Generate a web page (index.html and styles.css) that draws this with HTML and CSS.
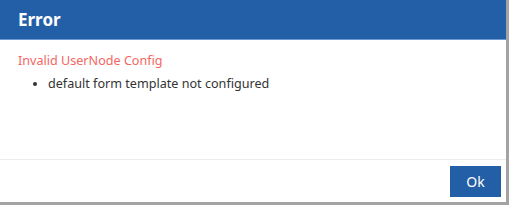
FILE: index.html
```html
<!DOCTYPE html>
<html>
<title>Error</title>

<head>
    <meta charset="utf-8">
    <link rel="stylesheet" href="styles.css">
</head>

<body>
    <div class="dialog">
        <div class="header">
            <h1>Error</h1>
        </div>
        <div class="content">
            <p class="error-title">Invalid UserNode Config</p>
            <ul class="error-list">
                <li>default form template not configured</li>
            </ul>
        </div>
        <div class="footer">
            <button class="ok">Ok</button>
        </div>
    </div>
</body>

</html>
```

FILE: styles.css
```css
body {
    font-family: "Noto Sans", "Open Sans", sans-serif;
    background-color: #a3a3a3;
    margin: 0;
    padding: 0;
    width: 509px;
    height: 205px;
    overflow: hidden;
}

.dialog {
    background-color: #fff;
    width: 506px;
    height: 202px;
    display: flex;
    flex-direction: column;
}

.header {
    background-color: #235fa6;
    border-bottom: 1px solid #6b98d2;
    height: 39px;
    padding: 0 18px;
    display: flex;
    align-items: center;
}

.header h1 {
    margin: 0;
    color: #fff;
    font-size: 17px;
    font-weight: bold;
}

.content {
    flex: 1;
    padding: 12px 18px 0;
}

.error-title {
    margin: 0;
    color: #f4665f;
    font-size: 12.6px;
}

.error-list {
    margin: 6px 0 0;
    padding-left: 30px;
    font-size: 12.6px;
    color: #333;
}

.footer {
    border-top: 1px solid #ececec;
    padding: 6px 5px 5px;
    display: flex;
    justify-content: flex-end;
}

.ok {
    width: 51px;
    height: 31px;
    background-color: #235fa6;
    color: #fff;
    border: none;
    font-family: inherit;
    font-size: 14px;
    cursor: pointer;
}
```
